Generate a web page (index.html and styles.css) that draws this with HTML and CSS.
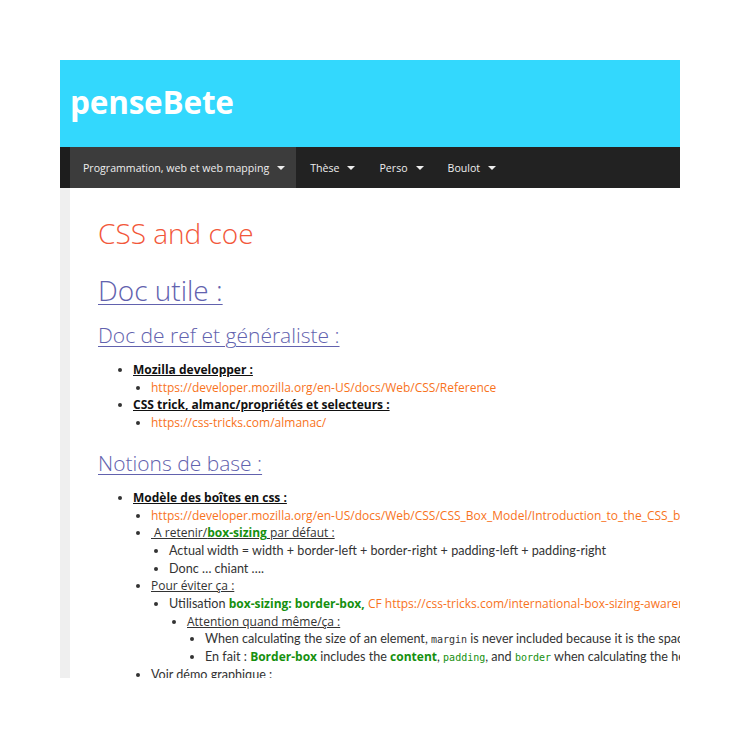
FILE: index.html
```html
<!DOCTYPE html>
<html lang="fr">
<head>
<meta charset="utf-8">
<title>penseBete</title>
<link rel="stylesheet" href="styles.css">
</head>
<body>
<div class="frame">
  <header class="site-header">
    <h1 class="site-title">penseBete</h1>
  </header>
  <nav class="nav">
    <div class="nav-edge"></div>
    <ul class="nav-list">
      <li class="nav-item active">Programmation, web et web mapping <span class="caret"></span></li>
      <li class="nav-item">Thèse <span class="caret"></span></li>
      <li class="nav-item">Perso <span class="caret"></span></li>
      <li class="nav-item">Boulot <span class="caret"></span></li>
    </ul>
  </nav>
  <div class="page">
    <div class="side"></div>
    <main class="content">
      <h1 class="entry-title">CSS and coe</h1>
      <h2 class="h-doc"><u>Doc utile :</u></h2>
      <h3 class="h-sub"><u>Doc de ref et généraliste :</u></h3>
      <ul class="lst">
        <li><strong class="lbl">Mozilla developper :</strong>
          <ul class="lst">
            <li><a class="lnk">https://developer.mozilla.org/en-US/docs/Web/CSS/Reference</a></li>
          </ul>
        </li>
        <li><strong class="lbl">CSS trick, almanc/propriétés et selecteurs :</strong>
          <ul class="lst">
            <li><a class="lnk">https://css-tricks.com/almanac/</a></li>
          </ul>
        </li>
      </ul>
      <h3 class="h-sub h-notions"><u>Notions de base :</u></h3>
      <ul class="lst">
        <li><strong class="lbl">Modèle des boîtes en css :</strong>
          <ul class="lst">
            <li><a class="lnk">https://developer.mozilla.org/en-US/docs/Web/CSS/CSS_Box_Model/Introduction_to_the_CSS_box_model</a></li>
            <li><u class="uline">&nbsp;A retenir/<strong class="grn">box-sizing</strong> par défaut :</u>
              <ul class="lst">
                <li>Actual width = width + border-left + border-right + padding-left + padding-right</li>
                <li>Donc … chiant ….</li>
              </ul>
            </li>
            <li><u class="uline">Pour éviter ça :</u>
              <ul class="lst">
                <li>Utilisation <strong class="grn">box-sizing: border-box,</strong> <a class="lnk">CF https://css-tricks.com/international-box-sizing-awareness-day/</a>
                  <ul class="lst">
                    <li><u class="uline">Attention quand même/ça :</u>
                      <ul class="lst">
                        <li>When calculating the size of an element, <code class="cd">margin</code> is never included because it is the space outside the element.</li>
                        <li>En fait : <strong class="grn">Border-box</strong> includes the <strong class="grn">content</strong>, <code class="cd grn-c">padding</code>, and <code class="cd grn-c">border</code> when calculating the height and width.</li>
                      </ul>
                    </li>
                  </ul>
                </li>
              </ul>
            </li>
            <li>Voir démo graphique :</li>
          </ul>
        </li>
      </ul>
    </main>
  </div>
</div>
</body>
</html>
```
FILE: styles.css
```css
html, body {
  margin: 0;
  padding: 0;
  background: #ffffff;
}
.frame {
  width: 620px;
  height: 618px;
  margin: 60px 0 0 60px;
  overflow: hidden;
  background: #fff;
  display: flex;
  flex-direction: column;
}
.site-header {
  height: 87px;
  background: #33d8fd;
  display: flex;
  align-items: center;
  padding-left: 10px;
  flex-shrink: 0;
}
.site-title {
  margin: 0;
  font-family: "Open Sans", sans-serif;
  font-weight: 700;
  font-size: 31.5px;
  color: #fff;
  letter-spacing: -0.2px;
  position: relative;
  top: -2px;
}
.nav {
  height: 41px;
  background: #222;
  display: flex;
  flex-shrink: 0;
}
.nav-edge {
  width: 10px;
  background: #1d1d1d;
}
.nav-list {
  list-style: none;
  margin: 0;
  padding: 0;
  display: flex;
}
.nav-item {
  font-family: "Open Sans", sans-serif;
  font-size: 10.6px;
  color: #eee;
  display: flex;
  align-items: center;
  padding: 0 10px 0 14px;
  white-space: nowrap;
}
.nav-item.active {
  background: #3c3c3c;
  padding: 0 11px 0 13px;
}
.caret {
  display: inline-block;
  width: 0;
  height: 0;
  margin-left: 8px;
  border-left: 4px solid transparent;
  border-right: 4px solid transparent;
  border-top: 4px solid #eee;
}
.page {
  flex: 1;
  display: flex;
  min-height: 0;
}
.side {
  width: 10px;
  background: #efefef;
  flex-shrink: 0;
}
.content {
  flex: 1;
  padding: 25px 0 0 28px;
  font-family: Lato, sans-serif;
  font-size: 12.6px;
  color: #333;
  white-space: nowrap;
  min-width: 0;
}
.entry-title {
  margin: 0;
  font-family: "Open Sans", sans-serif;
  font-weight: 300;
  font-size: 28px;
  line-height: 40px;
  color: #f2573a;
}
.h-doc {
  margin: 17px 0 0;
  font-family: "Open Sans", sans-serif;
  font-weight: 300;
  font-size: 28px;
  line-height: 40px;
  color: #6262ae;
}
.h-sub {
  margin: 10px 0 0;
  font-family: "Open Sans", sans-serif;
  font-weight: 300;
  font-size: 21px;
  line-height: 30px;
  color: #6262ae;
}
.h-notions {
  margin-top: 16px;
}
.h-doc u, .h-sub u {
  text-decoration-thickness: 1px;
  text-underline-offset: 3px;
}
.lst {
  margin: 0;
  padding-left: 18px;
  list-style: disc;
}
.content > .lst {
  padding-left: 35px;
  margin-top: 11px;
}
.lst li {
  line-height: 17.7px;
}
.lbl {
  font-family: "Open Sans", sans-serif;
  font-weight: 700;
  color: #111;
  text-decoration: underline;
  font-size: 12px;
}
.lnk {
  font-family: "Open Sans", sans-serif;
  color: #f8731c;
  font-size: 12px;
}
.uline {
  font-family: "Open Sans", sans-serif;
  font-size: 12px;
  color: #333;
}
.grn {
  font-family: "Open Sans", sans-serif;
  font-weight: 700;
  font-size: 12px;
  color: #16900f;
}
.cd {
  font-family: "DejaVu Sans Mono", monospace;
  font-size: 10px;
  line-height: 1;
  color: #333;
}
.grn-c {
  color: #16900f;
}
```
